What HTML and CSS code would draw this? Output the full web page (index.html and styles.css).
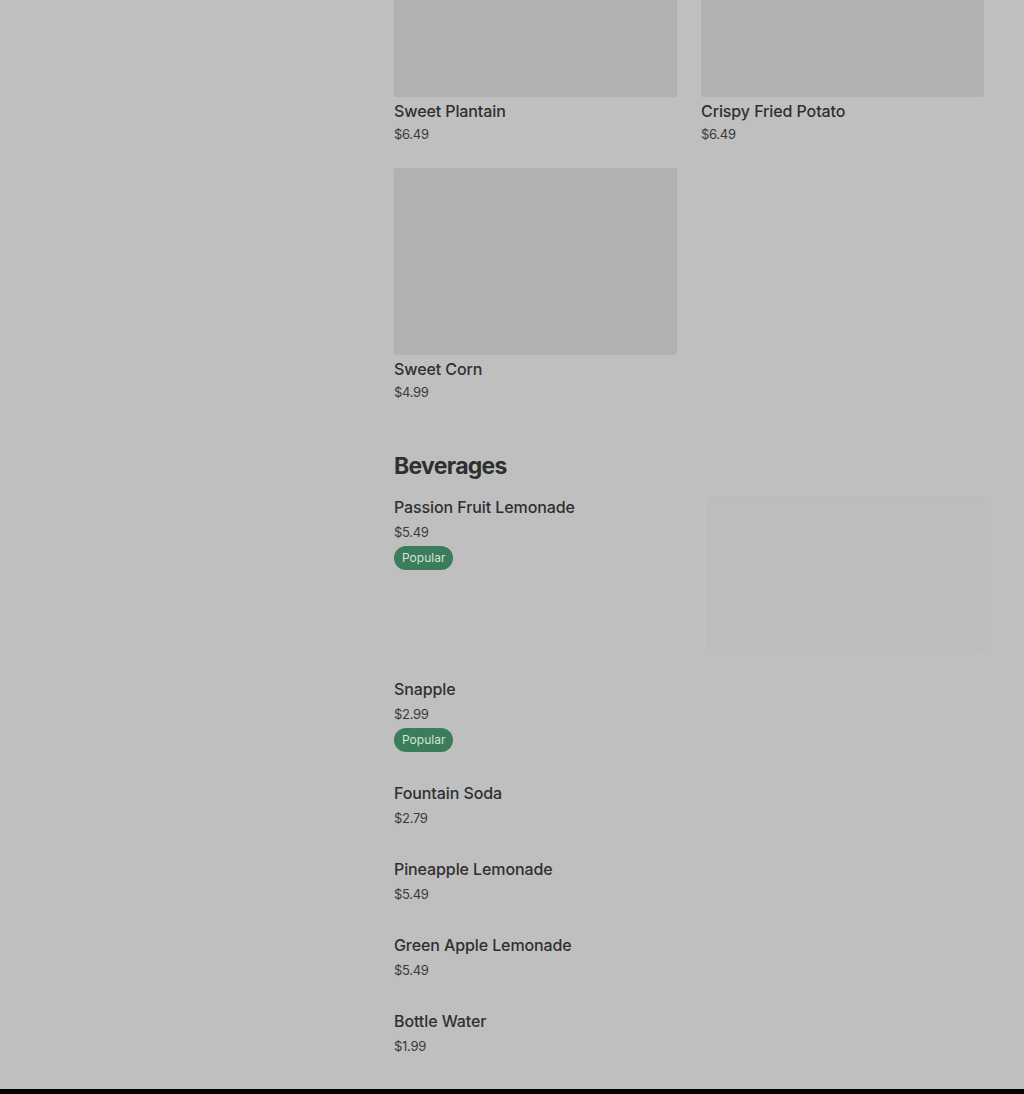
FILE: index.html
```html
<!DOCTYPE html>
<html lang="en">
<head>
  <meta charset="UTF-8" />
  <meta name="viewport" content="width=device-width, initial-scale=1.0"/>
  <title>Menu</title>
  <link rel="stylesheet" href="styles.css">
</head>
<body>
  <div class="page">
    <div class="sidebar"></div>

    <div class="menu">
      <!-- Sides -->
      <div class="grid">
        <div class="card">
          <div class="photo"></div>
          <div class="title">Sweet Plantain</div>
          <div class="price">$6.49</div>
        </div>
        <div class="card">
          <div class="photo"></div>
          <div class="title">Crispy Fried Potato</div>
          <div class="price">$6.49</div>
        </div>
        <div class="card">
          <div class="photo"></div>
          <div class="title">Sweet Corn</div>
          <div class="price">$4.99</div>
        </div>
      </div>

      <!-- Beverages -->
      <h2>Beverages</h2>
      <div class="list">
        <div class="item">
          <div class="info">
            <div class="title">Passion Fruit Lemonade</div>
            <div class="price">$5.49</div>
            <span class="badge">Popular</span>
          </div>
          <div class="thumb"></div>
        </div>
        <div class="item">
          <div class="info">
            <div class="title">Snapple</div>
            <div class="price">$2.99</div>
            <span class="badge">Popular</span>
          </div>
        </div>
        <div class="item">
          <div class="info">
            <div class="title">Fountain Soda</div>
            <div class="price">$2.79</div>
          </div>
        </div>
        <div class="item">
          <div class="info">
            <div class="title">Pineapple Lemonade</div>
            <div class="price">$5.49</div>
          </div>
        </div>
        <div class="item">
          <div class="info">
            <div class="title">Green Apple Lemonade</div>
            <div class="price">$5.49</div>
          </div>
        </div>
        <div class="item">
          <div class="info">
            <div class="title">Bottle Water</div>
            <div class="price">$1.99</div>
          </div>
        </div>
      </div>
    </div>
  </div>
  <div class="footer"></div>
</body>
</html>
```

FILE: styles.css
```css
body {
  margin: 0;
  font-family: Inter, "Liberation Sans", sans-serif;
  background-color: #bfbfbf;
  color: #2f2f2f;
}

.page {
  display: flex;
  margin-top: -90px;
}

.sidebar {
  width: 394px;
  flex-shrink: 0;
}

.menu {
  width: 590px;
}

.grid {
  display: grid;
  grid-template-columns: 1fr 1fr;
  column-gap: 24px;
  row-gap: 24px;
}

.photo {
  height: 187px;
  background-color: #b1b1b1;
  border-radius: 2px;
}

.title {
  font-size: 16px;
  font-weight: 500;
  line-height: 20px;
  letter-spacing: -0.1px;
}

.card .title {
  margin-top: 4px;
}

.price {
  font-size: 13px;
  line-height: 20px;
  margin-top: 3px;
  letter-spacing: -0.3px;
  color: #3a3a3a;
}

h2 {
  font-size: 23px;
  font-weight: 700;
  letter-spacing: -0.7px;
  line-height: 32px;
  margin: 48px 0 15px;
}

.list {
  padding-bottom: 2px;
}

.item {
  display: flex;
  justify-content: space-between;
  padding-bottom: 31px;
}

.info {
  display: flex;
  flex-direction: column;
  align-items: flex-start;
}

.item .price {
  margin-top: 5px;
}

.badge {
  margin-top: 4px;
  background-color: #3b7c5b;
  color: #d3e3d8;
  font-size: 12px;
  line-height: 24px;
  padding: 0 8px;
  border-radius: 12px;
}

.thumb {
  width: 275px;
  height: 154px;
  margin-top: 2px;
  margin-bottom: -5px;
  background-color: #bdbdbd;
  box-shadow: -1px -1px 2px #b8b8b8;
}

.footer {
  height: 5px;
  background-color: #000;
}
```
